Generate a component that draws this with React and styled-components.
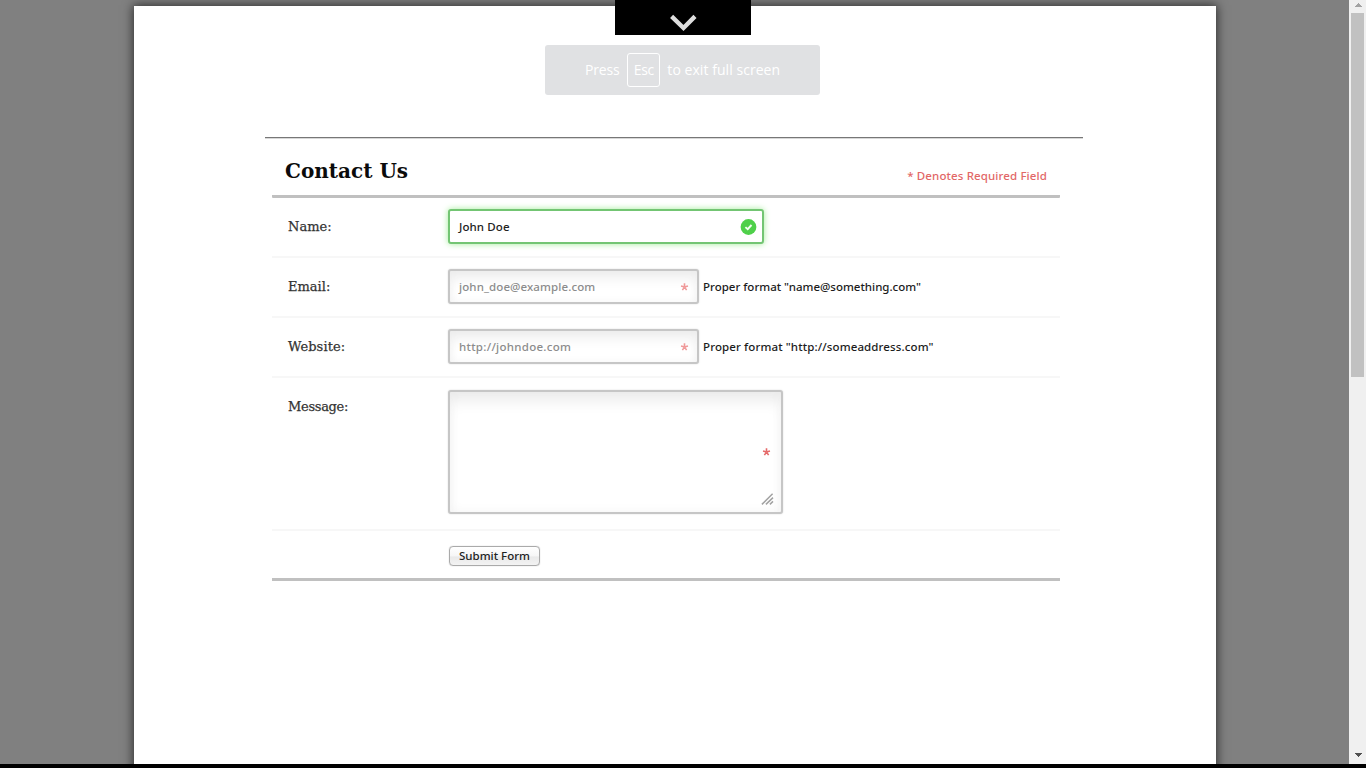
import React from "react";
import styled, { createGlobalStyle } from "styled-components";

const GlobalStyle = createGlobalStyle`
  * { box-sizing: border-box; }
  body { margin: 0; overflow: hidden; background: #000; }
`;

const SANS = `"Noto Sans", "Open Sans", sans-serif`;
const SERIF = `"DejaVu Serif", "Liberation Serif", serif`;

const Screen = styled.div`
  position: relative;
  display: flex;
  height: 768px;
  border-bottom: 4px solid #000;
  overflow: hidden;
`;

const Backdrop = styled.main`
  flex: 1;
  height: 764px;
  padding: 6px 133px 0 134px;
  background: #808080;
  overflow: hidden;
`;

const Paper = styled.div`
  height: 900px;
  padding: 131px 133px 0 131px;
  background: #fff;
  box-shadow: 0 0 10px 1px rgba(0, 0, 0, 0.65);
`;

const Sheet = styled.section`
  border-top: 1px solid #777;
  box-shadow: inset 0 1px 0 #d8d8d8;
  padding: 0 23px 0 7px;
`;

const Header = styled.header`
  display: flex;
  justify-content: space-between;
  height: 60px;
  padding: 0 13px;
  border-bottom: 3px solid #c0c0c0;
  border-radius: 1px;
`;

const Title = styled.h1`
  margin: 0;
  font: bold 20px/66px ${SERIF};
  letter-spacing: ${(p) => p.$tracking};
  color: #0b0b0b;
  white-space: nowrap;
`;

const Required = styled.span`
  font: 500 11.5px/76px ${SANS};
  letter-spacing: 0.12px;
  color: #e26767;
  white-space: nowrap;
`;

const Row = styled.div`
  display: flex;
  align-items: flex-start;
  height: ${(p) => p.$height || 60}px;
  padding-left: 16px;
  border-bottom: ${(p) => (p.$last ? "3px solid #c0c0c0" : "2px solid #f7f7f7")};
`;

const Label = styled.div`
  width: 160px;
  font: 500 13px/58px ${SERIF};
  letter-spacing: ${(p) => p.$tracking};
  -webkit-text-stroke: 0.25px #333;
  color: #333;
  white-space: nowrap;
`;

const Field = styled.div`
  display: flex;
  align-items: center;
  justify-content: space-between;
  width: ${(p) => p.$width}px;
  height: 35px;
  margin-top: 11px;
  padding: 0 ${(p) => (p.$valid ? 5 : 8)}px 0 9px;
  border: 2px solid ${(p) => (p.$valid ? "#73c573" : "#c6c6c6")};
  border-radius: 3px;
  font: 500 11.5px/16px ${SANS};
  color: ${(p) => (p.$valid ? "#222" : "#8c8c8c")};
  background: #fff;
  box-shadow: ${(p) =>
    p.$valid
      ? "0 0 6px #a3ec9a"
      : "0 0 2px #ddd, inset 0 10px 14px -4px #ebebeb, inset 0 0 8px #f5f5f5"};
`;

const FieldText = styled.span`
  letter-spacing: ${(p) => p.$tracking};
  white-space: nowrap;
`;

const MessageBox = styled.div`
  display: flex;
  flex-direction: column;
  align-items: flex-end;
  justify-content: space-between;
  width: 335px;
  height: 124px;
  margin-top: 12px;
  padding: 56px 7px 7px;
  border: 2px solid #c6c6c6;
  border-radius: 3px;
  background: #fff;
  box-shadow: 0 0 2px #ddd, inset 0 14px 16px -6px #eaeaea, inset 0 0 12px #f5f5f5;
`;

const MessageMark = styled.div`
  display: flex;
  padding-right: 3px;
`;

const Hint = styled.span`
  margin-left: 4px;
  font: 500 11.5px/58px ${SANS};
  letter-spacing: ${(p) => p.$tracking};
  color: #1c1c1c;
  white-space: nowrap;
`;

const Submit = styled.button`
  width: 91px;
  height: 20px;
  margin: 15px 0 0 1px;
  padding: 0;
  border: 1px solid #aaa;
  border-radius: 4px;
  background: linear-gradient(#fff, #f6f6f6 50%, #e9e9e9 55%, #f3f3f3);
  box-shadow: 0 0 1px #aaa;
  font: 500 11.5px/16px ${SANS};
  color: #222;
  white-space: nowrap;
`;

const PullTab = styled.div`
  position: absolute;
  top: 0;
  left: 615px;
  display: flex;
  justify-content: center;
  width: 136px;
  height: 35px;
  padding-top: 14px;
  background: #000;
`;

const Toast = styled.div`
  position: absolute;
  top: 45px;
  left: 545px;
  display: flex;
  align-items: center;
  width: 275px;
  height: 50px;
  padding-left: 40px;
  border-radius: 3px;
  background: #e0e1e3;
  font: 14px/20px "Open Sans", sans-serif;
  color: #fff;
  white-space: nowrap;
`;

const ToastText = styled.span`
  letter-spacing: ${(p) => p.$tracking};
`;

const Key = styled.span`
  display: flex;
  align-items: center;
  justify-content: center;
  width: 33px;
  height: 34px;
  margin: 0 7px 0 8px;
  border: 1px solid #fff;
  border-radius: 3px;
`;

const Scrollbar = styled.aside`
  display: flex;
  flex-direction: column;
  align-items: center;
  justify-content: space-between;
  width: 17px;
  height: 764px;
  padding: 3px 0 7px;
  background: #f0f0f0;
`;

const ScrollTop = styled.div`
  display: flex;
  flex-direction: column;
  align-items: center;
  gap: 6px;
`;

const Thumb = styled.div`
  width: 13px;
  height: 364px;
  background: #c1c1c1;
`;

const Star = ({ color }) => (
  <svg width="9" height="8" viewBox="0 0 9 9" fill="none" stroke={color} strokeWidth="1.8">
    <path d="M4.5 4.6V.4M4.5 4.6L.6 3.4M4.5 4.6L8.4 3.4M4.5 4.6L2.1 8M4.5 4.6L6.9 8" />
  </svg>
);

const Check = () => (
  <svg width="17" height="17" viewBox="0 0 17 17">
    <circle cx="8.5" cy="9" r="7.9" fill="#4fd04a" />
    <path d="M5.4 9.1l2.3 2 3.8-4.1" fill="none" stroke="#f4fff2" strokeWidth="1.9" />
  </svg>
);

const Grip = () => (
  <svg width="13" height="12" viewBox="0 0 13 12" fill="none" stroke="#a2a2a2" strokeWidth="1.5">
    <path d="M.9 11.4L11.6.8M4.9 11.4L12 4.6M8.9 11.4L12 8.4" />
  </svg>
);

const Arrow = ({ down }) => (
  <svg width="8" height="4" viewBox="0 0 8 4" shapeRendering="crispEdges">
    <path d={down ? "M0 0h8L4 4z" : "M4 0L8 4H0z"} fill={down ? "#505050" : "#a3a3a3"} />
  </svg>
);

export default function App() {
  return (
    <>
      <GlobalStyle />
      <Screen>
        <Backdrop>
          <Paper>
            <Sheet>
              <Header>
                <Title $tracking="0">Contact Us</Title>
                <Required>* Denotes Required Field</Required>
              </Header>
              <Row>
                <Label $tracking="0">Name:</Label>
                <Field $valid $width={316}>
                  <FieldText $tracking="0.1px">John Doe</FieldText>
                  <Check />
                </Field>
              </Row>
              <Row>
                <Label $tracking="0">Email:</Label>
                <Field $width={251}>
                  <FieldText $tracking="0.1px">john_doe@example.com</FieldText>
                  <Star color="#f09a9a" />
                </Field>
                <Hint $tracking="0">Proper format "name@something.com"</Hint>
              </Row>
              <Row>
                <Label $tracking="0.1px">Website:</Label>
                <Field $width={251}>
                  <FieldText $tracking="0.28px">http://johndoe.com</FieldText>
                  <Star color="#f09a9a" />
                </Field>
                <Hint $tracking="0.12px">Proper format "http://someaddress.com"</Hint>
              </Row>
              <Row $height={153}>
                <Label $tracking="-0.3px">Message:</Label>
                <MessageBox>
                  <MessageMark>
                    <Star color="#e56a6a" />
                  </MessageMark>
                  <Grip />
                </MessageBox>
              </Row>
              <Row $last $height={50}>
                <Label />
                <Submit>Submit Form</Submit>
              </Row>
            </Sheet>
          </Paper>
        </Backdrop>
        <Scrollbar>
          <ScrollTop>
            <Arrow />
            <Thumb />
          </ScrollTop>
          <Arrow down />
        </Scrollbar>
        <PullTab>
          <svg width="28" height="18" viewBox="0 0 28 18" fill="none" stroke="#dedede" strokeWidth="4.4">
            <path d="M2.6 2.4L14.5 14L26 2.4" />
          </svg>
        </PullTab>
        <Toast>
          <ToastText $tracking="-0.2px">Press</ToastText>
          <Key><ToastText $tracking="-0.3px">Esc</ToastText></Key>
          <ToastText $tracking="0.05px">to exit full screen</ToastText>
        </Toast>
      </Screen>
    </>
  );
}
